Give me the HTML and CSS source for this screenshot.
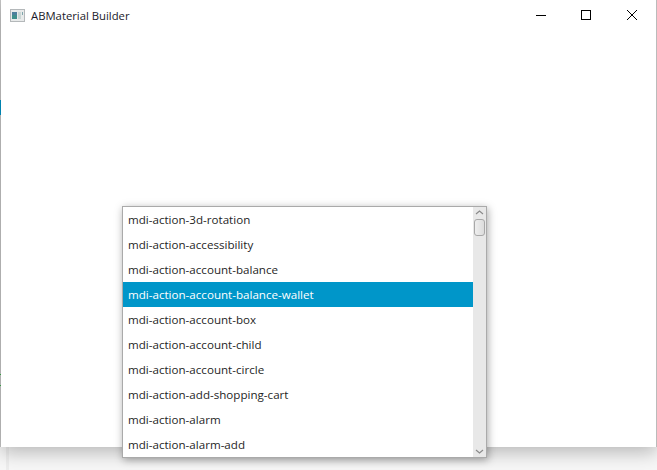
FILE: index.html
```html
<!DOCTYPE html>
<html lang="en">
<head>
    <meta charset="UTF-8">
    <title>ABMaterial Builder</title>
    <link rel="stylesheet" href="styles.css">
</head>
<body>
    <div class="window">
        <div class="titlebar">
            <svg class="app-icon" width="15" height="13" viewBox="0 0 15 13">
                <rect x="0.5" y="0.5" width="14" height="12" fill="#e8eaea" stroke="#b4b8ba"/>
                <rect x="2" y="3" width="5" height="7" fill="#3f8f8c"/>
                <rect x="2" y="3" width="5" height="3" fill="#4d7f9c"/>
                <rect x="8" y="3" width="3" height="7" fill="#c9d6d4"/>
                <rect x="12" y="3" width="1" height="3" fill="#7fa6ac"/>
            </svg>
            <span class="title">ABMaterial Builder</span>
            <div class="controls">
                <svg width="45" height="30" viewBox="0 0 45 30"><path d="M18 15.5h10" stroke="#000" fill="none"/></svg>
                <svg width="46" height="30" viewBox="0 0 46 30"><rect x="18.5" y="10.5" width="9" height="9" stroke="#000" fill="none"/></svg>
                <svg width="46" height="30" viewBox="0 0 46 30"><path d="M18 10l10 10M28 10l-10 10" stroke="#000" fill="none"/></svg>
            </div>
        </div>
    </div>

    <div class="popup">
        <ul class="list">
            <li>mdi-action-3d-rotation</li>
            <li>mdi-action-accessibility</li>
            <li>mdi-action-account-balance</li>
            <li class="selected">mdi-action-account-balance-wallet</li>
            <li>mdi-action-account-box</li>
            <li>mdi-action-account-child</li>
            <li>mdi-action-account-circle</li>
            <li>mdi-action-add-shopping-cart</li>
            <li>mdi-action-alarm</li>
            <li>mdi-action-alarm-add</li>
        </ul>
        <div class="scrollbar">
            <svg width="13" height="11" viewBox="0 0 13 11"><path d="M3 7l3.5-3L10 7" stroke="#8a8a8a" stroke-width="1.2" fill="none"/></svg>
            <div class="thumb"></div>
            <div class="track"></div>
            <svg width="13" height="11" viewBox="0 0 13 11"><path d="M3 4l3.5 3L10 4" stroke="#8a8a8a" stroke-width="1.2" fill="none"/></svg>
        </div>
    </div>
</body>
</html>
```
FILE: styles.css
```css
html, body {
    height: 100%;
}

body {
    margin: 0;
    overflow: hidden;
    /* bits of the window behind show in the 1px left of ours */
    background:
        linear-gradient(to bottom,
            #c8c8c8 0, #c8c8c8 100px,
            #0096c9 100px, #0096c9 115px,
            #c8c8c8 115px, #c8c8c8 374px,
            #3cb44b 374px, #3cb44b 375px,
            #c8c8c8 375px, #c8c8c8 385px,
            #3cb44b 385px, #3cb44b 386px,
            #c8c8c8 386px, #c8c8c8 447px,
            transparent 447px) left top / 1px 100% no-repeat,
        linear-gradient(#ededed, #ededed) 6px top / 3px 100% no-repeat,
        #f7f7f7;
    font-family: "Open Sans", "Noto Sans", sans-serif;
    font-size: 11.6px;
    color: #1f1f1f;
}

/* main window, the shadow falls on the desktop below it */
.window {
    height: 447px;
    margin-left: 1px;
    background: #fff;
    box-shadow: 0 5px 18px rgba(0, 0, 0, 0.27);
    border-right: 1px solid #bbb;
}

.titlebar {
    display: flex;
    align-items: center;
    height: 30px;
    padding-left: 9px;
}

.app-icon {
    margin-right: 6px;
}

.title {
    font-size: 11.3px;
    color: #1a1a2a;
}

.controls {
    display: flex;
    margin-left: auto;
    padding-right: 1px;
}

/* dropdown floats over the window */
.popup {
    position: absolute;
    left: 122px;
    top: 206px;
    width: 363px;
    height: 250px;
    display: flex;
    background: #fff;
    border: 1px solid #aaa;
    box-shadow: 1px 2px 8px rgba(0, 0, 0, 0.35);
}

.list {
    flex: 1;
    margin: 0;
    padding: 0;
    list-style: none;
}

.list li {
    height: 25px;
    line-height: 25px;
    padding-left: 5px;
    white-space: nowrap;
}

.list li.selected {
    background: #0096c9;
    color: #fff;
}

.scrollbar {
    display: flex;
    flex-direction: column;
    align-items: center;
    flex: none;
    box-sizing: border-box;
    width: 13px;
    background: #e8e8e8;
}

.scrollbar svg {
    flex: none;
}

.thumb {
    box-sizing: border-box;
    width: 11px;
    height: 17px;
    margin-top: 1px;
    border: 1px solid #a8a8a8;
    border-radius: 3px;
    background: linear-gradient(to right, #eee, #dcdcdc);
}

.track {
    flex: 1;
}
```
